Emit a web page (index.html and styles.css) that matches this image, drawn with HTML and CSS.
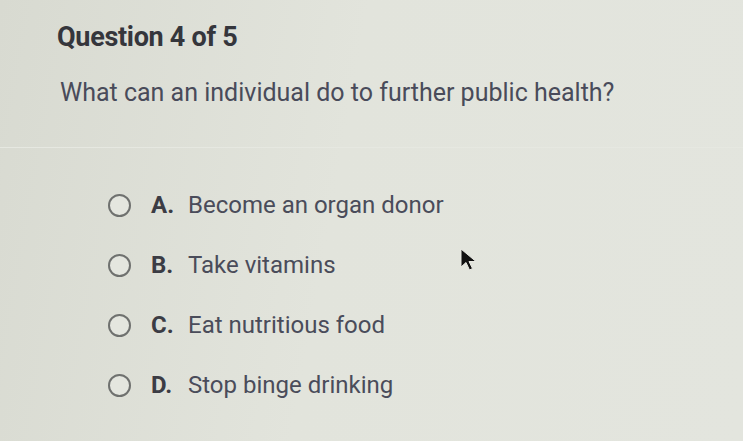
FILE: index.html
```html
<!DOCTYPE html>
<html lang="en">
<head>
  <meta charset="UTF-8">
  <meta name="viewport" content="width=device-width, initial-scale=1.0">
  <title>Question 4 of 5</title>
  <link rel="stylesheet" href="styles.css">
</head>
<body>

  <main class="quiz">
    <header class="quiz-head">
      <h2>Question 4 of 5</h2>
      <p class="pregunta">What can an individual do to further public health?</p>
    </header>

    <ul class="opciones">
      <li class="opcion"><span class="radio"></span><b>A.</b><span>Become an organ donor</span></li>
      <li class="opcion"><span class="radio"></span><b>B.</b><span>Take vitamins</span></li>
      <li class="opcion"><span class="radio"></span><b>C.</b><span>Eat nutritious food</span></li>
      <li class="opcion"><span class="radio"></span><b>D.</b><span>Stop binge drinking</span></li>
    </ul>

    <svg class="cursor" width="22" height="26" viewBox="0 0 22 26">
      <path d="M2 2 L2 20 L7 15.5 L10.5 23 L13.5 21.5 L10 14.5 L17 14.5 Z" fill="#111" stroke="#e8e8e2" stroke-width="1"/>
    </svg>
  </main>

</body>
</html>
```

FILE: styles.css
```css
body {
  margin: 0;
  padding: 0;
  font-family: Roboto, "Liberation Sans", Arial, sans-serif;
  background: linear-gradient(100deg, #d8dad1 0%, #e2e4dc 45%, #e3e5de 100%);
  color: #3c3d44;
}
.quiz {
  position: relative;
  height: 441px;
  overflow: hidden;
}
.quiz-head {
  padding: 21px 0 0 57px;
  height: 148px;
  border-bottom: 1px solid #e6e8e1;
  box-sizing: border-box;
}
.quiz-head h2 {
  margin: 0;
  font-size: 27px;
  font-weight: 700;
  color: #35363c;
  letter-spacing: -0.3px;
}
.pregunta {
  margin: 25px 0 0 3px;
  font-size: 25px;
  color: #494b5a;
}
.opciones {
  list-style: none;
  margin: 0;
  padding: 27px 0 0 108px;
}
.opcion {
  display: flex;
  align-items: center;
  height: 60px;
  font-size: 24px;
  color: #4a4c5a;
}
.opcion b {
  width: 37px;
  margin-left: 20px;
  color: #3b3c44;
  font-weight: 700;
}
.radio {
  width: 19px;
  height: 19px;
  border: 2px solid #6f716f;
  border-radius: 50%;
  background-color: #e4e6df;
}
.cursor {
  position: absolute;
  left: 459px;
  top: 247px;
}
```
